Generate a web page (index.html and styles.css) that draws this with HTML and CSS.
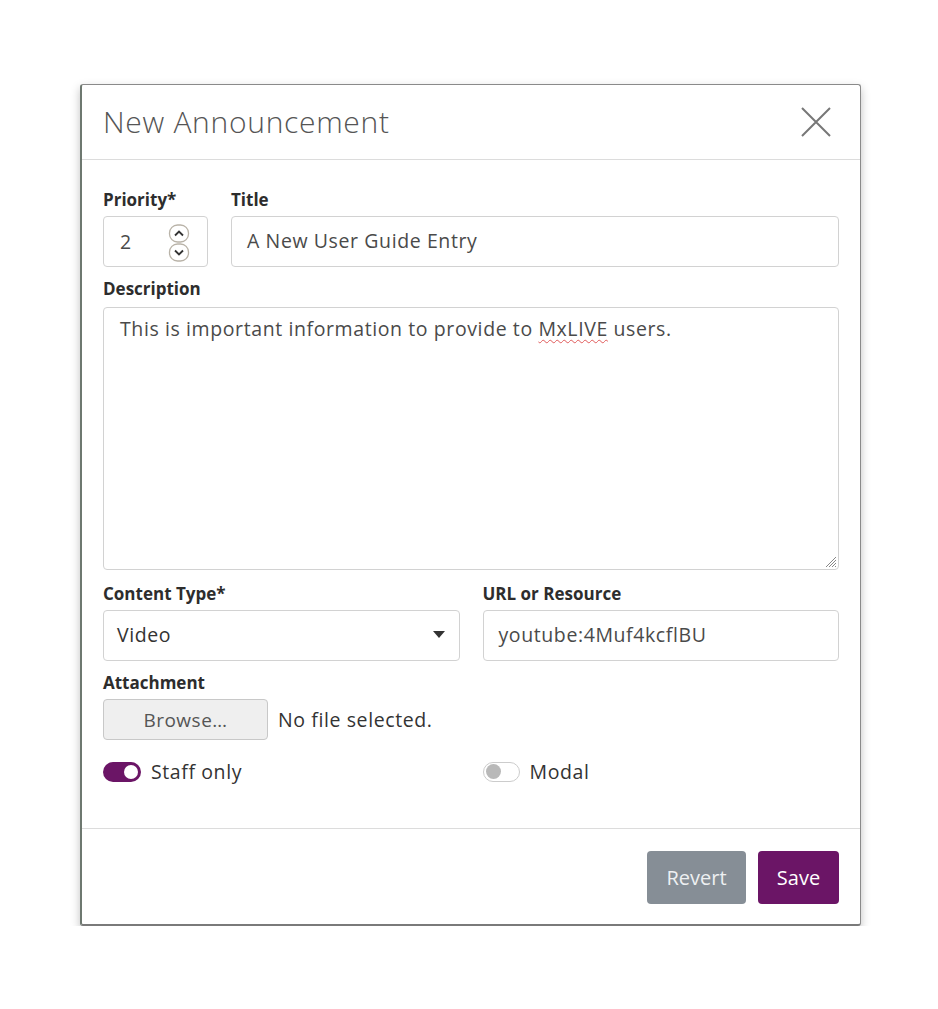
FILE: index.html
```html
<!DOCTYPE html>
<html>
<head>
<meta charset="utf-8">
<link rel="stylesheet" href="styles.css">
</head>
<body>
<div class="stage">
  <div class="modal">
    <div class="modal-header">
      <h1 class="modal-title">New Announcement</h1>
      <span class="close">
        <svg width="32" height="32" viewBox="0 0 32 32"><path d="M2 2 L30 30 M30 2 L2 30" stroke="#777" stroke-width="2" fill="none"/></svg>
      </span>
    </div>
    <div class="modal-body">
      <div class="row row-top">
        <div class="field">
          <label class="lbl">Priority*</label>
          <div class="input num">
            <span>2</span>
            <span class="spin">
              <svg width="22" height="40" viewBox="0 0 22 40">
                <rect x="1.5" y="3" width="19" height="17" rx="8" fill="#fff" stroke="#b9b3a8" stroke-width="1.3"/>
                <rect x="1.5" y="22" width="19" height="17" rx="8" fill="#fff" stroke="#b9b3a8" stroke-width="1.3"/>
                <path d="M7 13.5 L11 9.5 L15 13.5" stroke="#333" stroke-width="1.8" fill="none"/>
                <path d="M7 28.5 L11 32.5 L15 28.5" stroke="#333" stroke-width="1.8" fill="none"/>
              </svg>
            </span>
          </div>
        </div>
        <div class="field">
          <label class="lbl">Title</label>
          <div class="input">A New User Guide Entry</div>
        </div>
      </div>
      <div class="field field-desc">
        <label class="lbl">Description</label>
        <div class="textarea">This is important information to provide to <span class="spell">MxLIVE</span> users.
          <svg class="grip" width="14" height="14" viewBox="0 0 14 14"><path d="M13 3 L3 13 M13 6 L6 13 M13 9 L9 13 M13 12 L12 13" stroke="#888" stroke-width="1"/></svg>
        </div>
      </div>
      <div class="row row-half">
        <div class="field">
          <label class="lbl">Content Type*</label>
          <div class="input select"><span>Video</span>
            <svg width="12" height="8" viewBox="0 0 12 8"><path d="M0 0 H12 L6 7 Z" fill="#333"/></svg>
          </div>
        </div>
        <div class="field">
          <label class="lbl">URL or Resource</label>
          <div class="input">youtube:4Muf4kcflBU</div>
        </div>
      </div>
      <div class="field">
        <label class="lbl">Attachment</label>
        <div class="file">
          <span class="browse">Browse…</span>
          <span class="nofile">No file selected.</span>
        </div>
      </div>
      <div class="row row-half toggles">
        <div class="toggle on"><span class="track"><span class="knob"></span></span><span>Staff only</span></div>
        <div class="toggle off"><span class="track"><span class="knob"></span></span><span>Modal</span></div>
      </div>
    </div>
    <div class="modal-footer">
      <span class="btn btn-revert">Revert</span>
      <span class="btn btn-save">Save</span>
    </div>
  </div>
</div>
</body>
</html>
```

FILE: styles.css
```css
* { box-sizing: border-box; }
html, body { margin: 0; padding: 0; background: #fff; }
body { font-family: "Open Sans", "Noto Sans", sans-serif; color: #333; }
.stage { padding: 84px 0 0 80px; }
.modal {
  width: 781px;
  height: 842px;
  background: #fff;
  border: 1px solid #8a8a8a;
  border-left: 2px solid #6e7870;
  border-bottom: 2px solid #7a7a7a;
  border-radius: 3px;
  box-shadow: 0 4px 10px rgba(0,0,0,0.25);
  display: flex;
  flex-direction: column;
}
.modal-header {
  height: 75px;
  border-bottom: 1px solid #dcdcdc;
  display: flex;
  align-items: center;
  justify-content: space-between;
  padding: 0 28px 2px 21px;
}
.modal-title {
  margin: 0;
  font-size: 30px;
  font-weight: 300;
  color: #555;
  letter-spacing: 0.7px;
}
.close { display: flex; margin-top: 2px; }
.modal-body {
  flex: 1;
  padding: 28px 21px 0 21px;
  display: flex;
  flex-direction: column;
}
.row { display: grid; column-gap: 23px; }
.row-top { grid-template-columns: 105px 1fr; }
.row-half { grid-template-columns: 1fr 1fr; }
.field { display: flex; flex-direction: column; margin-bottom: 10px; }
.field-desc { margin-bottom: 12px; }
.field-desc .lbl { margin-bottom: 6px; }
.lbl {
  font-size: 17px;
  font-weight: 700;
  color: #2d2d2d;
  line-height: 24px;
  margin-bottom: 4px;
  letter-spacing: 0;
}
.input {
  height: 51px;
  border: 1px solid #d2d2d2;
  border-radius: 4px;
  padding: 0 15px 2px;
  display: flex;
  align-items: center;
  font-size: 19.5px;
  letter-spacing: 0.6px;
  color: #4a4a4a;
}
.num { justify-content: space-between; padding: 0 17px 0 16px; }
.spin { display: flex; }
.textarea {
  position: relative;
  height: 263px;
  border: 1px solid #d2d2d2;
  border-radius: 4px;
  padding: 7px 16px;
  font-size: 19.5px;
  letter-spacing: 0.6px;
  color: #4a4a4a;
  line-height: 28px;
}
.spell { text-decoration: underline wavy #e05a5a; text-decoration-thickness: 1px; text-underline-offset: 3px; }
.grip { position: absolute; right: 1px; bottom: 1px; }
.select { justify-content: space-between; padding: 0 14px 2px 13px; color: #333; }
.file { display: flex; align-items: center; gap: 10px; }
.browse {
  width: 165px;
  height: 41px;
  border: 1px solid #c8c8c8;
  border-radius: 4px;
  background: #efefef;
  display: flex;
  align-items: center;
  justify-content: center;
  font-size: 19px;
  letter-spacing: 0.5px;
  color: #555;
}
.nofile { font-size: 19.5px; letter-spacing: 0.6px; color: #333; }
.toggles { margin-top: 8px; }
.toggle { display: flex; align-items: center; gap: 10px; font-size: 19.5px; letter-spacing: 0.6px; color: #333; }
.track {
  width: 38px;
  height: 20px;
  border-radius: 10px;
  display: flex;
  align-items: center;
  padding: 0 3px;
}
.knob { width: 14px; height: 14px; border-radius: 50%; }
.on .track { background: #6b1566; justify-content: flex-end; }
.on .knob { background: #fff; }
.off .track { border: 1.5px solid #ccc; background: #fff; width: 37px; padding: 0 2px; }
.off .knob { background: #b9b9b9; width: 15px; height: 15px; }
.modal-footer {
  height: 96px;
  border-top: 1px solid #dcdcdc;
  display: flex;
  align-items: center;
  justify-content: flex-end;
  gap: 12px;
  padding: 2px 21px 0 0;
}
.btn {
  height: 53px;
  border-radius: 4px;
  display: flex;
  align-items: center;
  justify-content: center;
  font-size: 20px;
  color: #fff;
}
.btn-revert { width: 99px; background: #868e96; color: #eef0f2; }
.btn-save { width: 81px; background: #6b1566; }
```
